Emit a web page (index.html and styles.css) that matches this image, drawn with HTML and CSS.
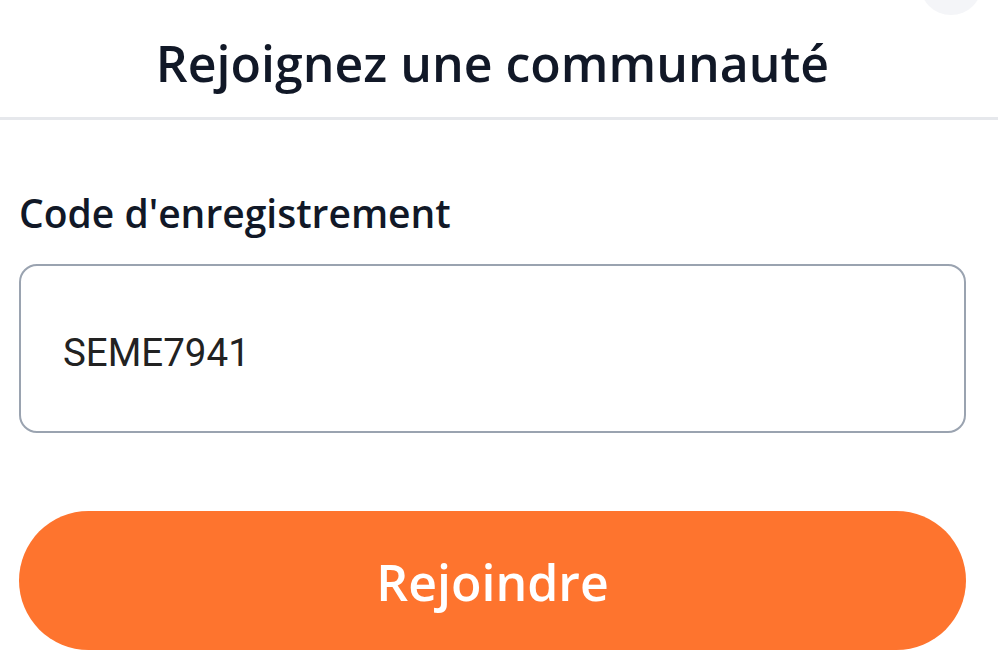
FILE: index.html
```html
<!DOCTYPE html>
<html lang="fr">
<head>
    <meta charset="UTF-8">
    <meta name="viewport" content="width=device-width, initial-scale=1.0">
    <title>Rejoignez une communauté</title>
    <link rel="stylesheet" href="styles.css">
</head>
<body>
    <div class="sheet">
        <span class="close-btn"></span>
        <header class="sheet-header">
            <h1>Rejoignez une communauté</h1>
        </header>
        <form class="join-form" onsubmit="return false;">
            <label for="code">Code d'enregistrement</label>
            <input type="text" id="code" value="SEME7941">
            <button type="submit">Rejoindre</button>
        </form>
    </div>
</body>
</html>
```

FILE: styles.css
```css
body {
    margin: 0;
    background-color: white;
    font-family: 'Open Sans', 'Noto Sans', sans-serif;
    overflow: hidden;
}
.sheet {
    position: relative;
    height: 667px;
}
.close-btn {
    position: absolute;
    top: -47px;
    left: 920px;
    width: 62px;
    height: 62px;
    border-radius: 50%;
    background-color: #f4f5f8;
}
.sheet-header {
    padding: 30px 32px 21px 19px;
    border-bottom: 3px solid #e6e8ec;
}
h1 {
    margin: 0;
    text-align: center;
    font-size: 50px;
    line-height: 66px;
    font-weight: 600;
    color: #111827;
}
.join-form {
    display: flex;
    flex-direction: column;
    padding: 69px 32px 0 19px;
}
label {
    font-size: 39px;
    line-height: 48px;
    font-weight: 600;
    color: #111827;
    margin-bottom: 27px;
}
input {
    box-sizing: border-box;
    height: 169px;
    padding: 7px 42px 0;
    border: 2px solid #9aa3b0;
    border-radius: 18px;
    font-family: Roboto, sans-serif;
    font-size: 38.5px;
    color: #222;
    outline: none;
}
button {
    box-sizing: border-box;
    height: 139px;
    margin-top: 78px;
    padding-top: 4px;
    border: none;
    border-radius: 70px;
    background-color: #fe742e;
    color: white;
    font-family: 'Open Sans', sans-serif;
    font-size: 50px;
    font-weight: 600;
    cursor: pointer;
}
```
